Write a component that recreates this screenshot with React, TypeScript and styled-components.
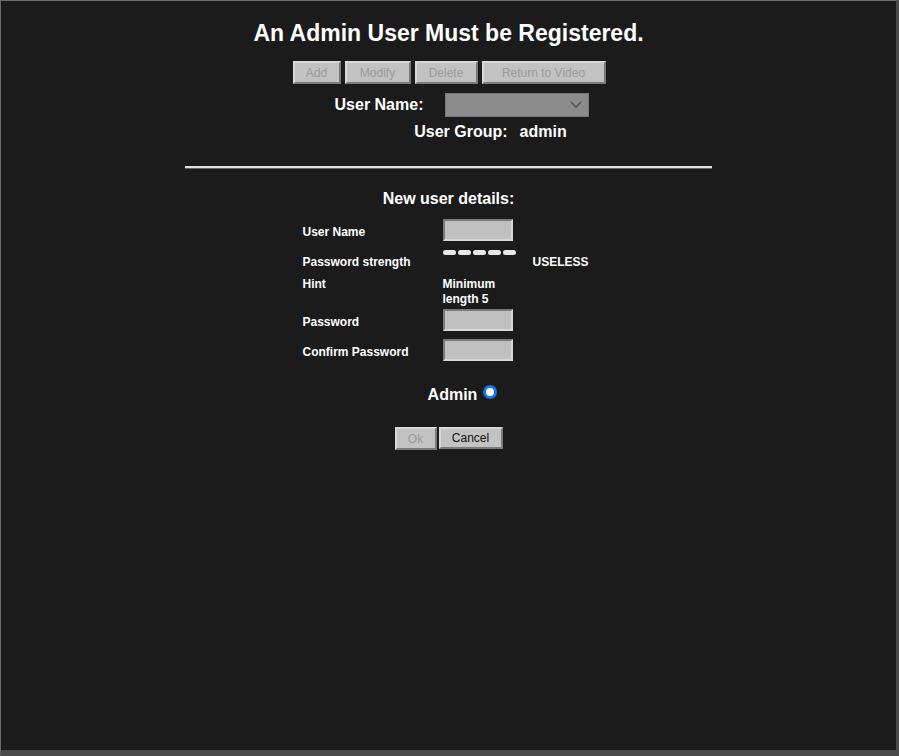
import React from "react";
import styled, { createGlobalStyle } from "styled-components";

const Global = createGlobalStyle`
  html, body { margin: 0; padding: 0; background: #c8c8c8; }
  body { font-family: "Liberation Sans", Arial, sans-serif; }
`;

const Frame = styled.div`
  width: 899px; height: 756px; box-sizing: border-box;
  background: #1b1b1b;
  border-top: 1px solid #6a6a6a; border-left: 1px solid #6a6a6a;
  border-right: 3px solid #4a4a4a; border-bottom: 6px solid #4a4a4a;
  color: #fff; display: flex; flex-direction: column; align-items: center;
`;
const Title = styled.h1`
  margin: 16px 0 0 0; font-size: 23px; font-weight: bold; line-height: 32px; padding-left: 0;
`;
const BtnRow = styled.div`display: flex; gap: 4px; margin-top: 12px; margin-left: 1px;`;
const Btn = styled.button<{ $w: number; $on?: boolean }>`
  width: ${p => p.$w}px; height: 23px; padding: 0;
  font-family: "Liberation Sans", Arial, sans-serif; font-size: 12px;
  background: #c2c2c2; color: ${p => (p.$on ? "#111" : "#9a9a9a")};
  border: 2px solid; border-color: #d8d8d8 #7a7a7a #7a7a7a #d8d8d8;
`;
const Line = styled.div`display: flex; align-items: center; font-weight: bold; font-size: 16px;`;
const Select = styled.div`
  width: 144px; height: 24px; box-sizing: border-box; background: #8c8c8c; border: 1px solid #777;
  margin-left: 22px; display: flex; justify-content: flex-end; align-items: center; padding-right: 6px;
`;
const Rule = styled.div`width: 527px; height: 2px; background: #e0e0e0; margin-top: 25px; border-bottom: 1px solid #666;`;
const Grid = styled.div`
  display: grid; grid-template-columns: 140px 90px auto; column-gap: 0; row-gap: 0;
  margin-top: 17px; margin-left: 148px; width: 440px; font-size: 12px; font-weight: bold;
`;
const Cell = styled.div<{ $h: number }>`height: ${p => p.$h}px; line-height: 15px;`;
const Input = styled.div`
  width: 70px; height: 22px; box-sizing: border-box; background: #c0c0c0;
  border: 2px solid; border-color: #7a7a7a #d8d8d8 #d8d8d8 #7a7a7a; margin-top: -6px;
`;
const Bars = styled.div`display: flex; gap: 2px; margin-top: -5px;`;
const Bar = styled.div`width: 13px; height: 5px; border-radius: 3px; background: #e8e8e8;`;
const Radio = styled.div`
  width: 14px; height: 14px; border-radius: 50%; box-sizing: border-box; border: 3px solid #1a73e8;
  background: #fff; margin-left: 6px; margin-top: -6px;
`;

export default function App() {
  return (
    <>
      <Global />
      <Frame>
        <Title>An Admin User Must be Registered.</Title>
        <BtnRow>
          <Btn $w={48}>Add</Btn><Btn $w={66}>Modify</Btn><Btn $w={63}>Delete</Btn><Btn $w={124}>Return to Video</Btn>
        </BtnRow>
        <Line style={{ marginTop: 9, marginLeft: 27 }}>User Name:<Select>
          <svg width="12" height="8" viewBox="0 0 12 8"><path d="M1 1l5 5 5-5" stroke="#555" strokeWidth="1.6" fill="none" /></svg>
        </Select></Line>
        <Line style={{ marginTop: 6, marginLeft: 84 }}>User Group:<span style={{ marginLeft: 12 }}>admin</span></Line>
        <Rule />
        <Line style={{ marginTop: 21, marginLeft: 0 }}>New user details:</Line>
        <Grid>
          <Cell $h={30}>User Name</Cell><Cell $h={30}><Input /></Cell><Cell $h={30} />
          <Cell $h={22}>Password strength</Cell><Cell $h={22}><Bars><Bar /><Bar /><Bar /><Bar /><Bar /></Bars></Cell><Cell $h={22}>USELESS</Cell>
          <Cell $h={38}>Hint</Cell><Cell $h={38}>Minimum<br />length 5</Cell><Cell $h={38} />
          <Cell $h={30}>Password</Cell><Cell $h={30}><Input /></Cell><Cell $h={30} />
          <Cell $h={30}>Confirm Password</Cell><Cell $h={30}><Input /></Cell><Cell $h={30} />
        </Grid>
        <Line style={{ marginTop: 11, marginLeft: 28 }}>Admin<Radio /></Line>
        <BtnRow style={{ marginTop: 23, gap: 2, marginLeft: 0 }}>
          <Btn $w={42}>Ok</Btn><Btn $w={64} $on style={{ height: 22 }}>Cancel</Btn>
        </BtnRow>
      </Frame>
    </>
  );
}
